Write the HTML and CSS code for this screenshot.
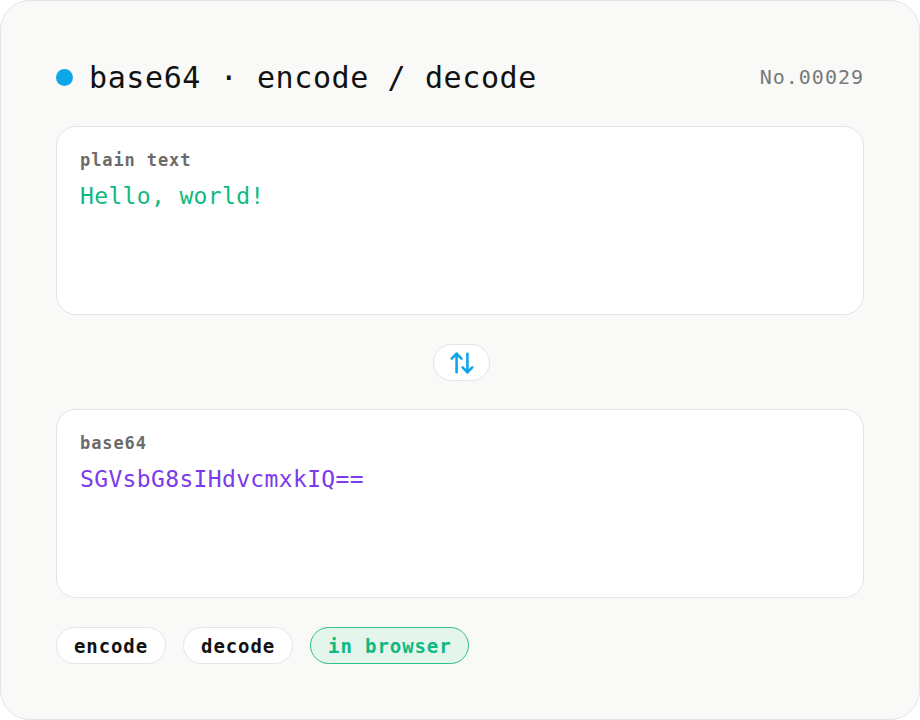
FILE: index.html
```html
<!DOCTYPE html>
<html lang="en">

<head>
  <meta charset="UTF-8">
  <meta name="viewport" content="width=device-width, initial-scale=1.0">
  <title>base64 · encode / decode</title>
  <link rel="stylesheet" href="styles.css">
</head>

<body>
  <main class="card">
    <header class="head">
      <span class="dot"></span>
      <h1 class="title">base64 · encode / decode</h1>
      <span class="serial">No.00029</span>
    </header>

    <section class="panel">
      <div class="label">plain text</div>
      <div class="value plain">Hello, world!</div>
    </section>

    <div class="swap-row">
      <button class="swap" aria-label="swap">
        <svg width="26" height="26" viewBox="0 0 24 24" fill="none" stroke="currentColor" stroke-width="2.4"
          stroke-linecap="round" stroke-linejoin="round">
          <path d="m2.5 8 4.5-4.5 4.5 4.5" />
          <path d="M7 3.5v17" />
          <path d="m21.5 16-4.5 4.5-4.5-4.5" />
          <path d="M17 20.5v-17" />
        </svg>
      </button>
    </div>

    <section class="panel">
      <div class="label">base64</div>
      <div class="value encoded">SGVsbG8sIHdvcmxkIQ==</div>
    </section>

    <div class="tags">
      <span class="tag">encode</span>
      <span class="tag">decode</span>
      <span class="tag tag-on">in browser</span>
    </div>
  </main>
</body>

</html>
```

FILE: styles.css
```css
* {
  box-sizing: border-box;
}

body {
  margin: 0;
  font-family: "DejaVu Sans Mono", "Liberation Mono", monospace;
  color: #111;
}

.card {
  width: 920px;
  height: 720px;
  background: #f9f9f7;
  border: 1px solid #e3e3e6;
  border-radius: 30px;
  padding: 46px 55px 0 55px;
}

.head {
  display: flex;
  align-items: center;
  height: 60px;
}

.dot {
  width: 17px;
  height: 17px;
  border-radius: 50%;
  background: #0ea5e9;
  margin-right: 16px;
}

.title {
  margin: 0;
  font-size: 30px;
  font-weight: 400;
  letter-spacing: 0.6px;
  color: #111;
}

.serial {
  margin-left: auto;
  font-size: 20px;
  letter-spacing: 1px;
  color: #7a7a7a;
}

.panel {
  margin-top: 19px;
  height: 189px;
  background: #fff;
  border: 1px solid #e4e4e8;
  border-radius: 20px;
  padding: 23px 23px;
}

.label {
  font-size: 17px;
  font-weight: bold;
  letter-spacing: 0.9px;
  color: #6b6b6b;
}

.value {
  margin-top: 13px;
  font-size: 23px;
  letter-spacing: 0.35px;
}

.plain {
  color: #10b981;
}

.encoded {
  color: #7c3aed;
}

.swap-row {
  display: flex;
  justify-content: center;
  margin-top: 29px;
}

.swap {
  width: 57px;
  height: 37px;
  display: flex;
  align-items: center;
  justify-content: center;
  background: #fff;
  border: 1px solid #e4e4e8;
  border-radius: 19px;
  color: #0ea5e9;
  padding: 0;
  margin-left: 3px;
}

.swap-row + .panel {
  margin-top: 28px;
}

.tags {
  display: flex;
  gap: 17px;
  margin-top: 29px;
}

.tag {
  height: 37px;
  padding: 0 17px;
  display: flex;
  align-items: center;
  background: #fff;
  border: 1px solid #e4e4e8;
  border-radius: 19px;
  font-size: 19px;
  font-weight: bold;
  letter-spacing: 0.9px;
  color: #111;
}

.tag-on {
  background: #e4f5ec;
  border-color: #2fbf88;
  color: #10b981;
}
```
